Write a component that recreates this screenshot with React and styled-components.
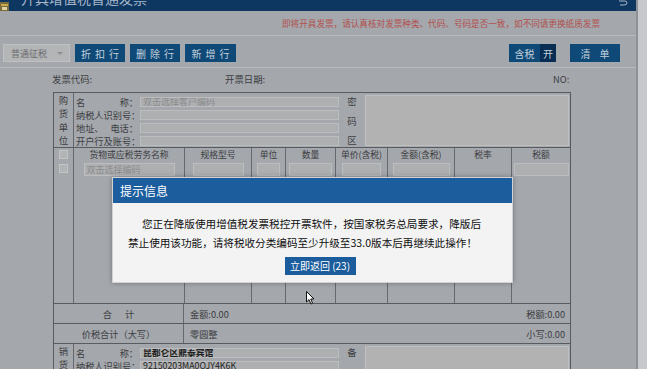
import React from 'react';
import styled, { createGlobalStyle } from 'styled-components';

const GlobalStyle = createGlobalStyle`
  body {
    margin: 0;
    background: #a4a7ac;
  }
`;

const Root = styled.div`
  position: relative;
  width: 647px;
  height: 369px;
  overflow: hidden;
  display: flex;
  background: #a4a7ac;
  color: #3c3e42;
  font-family: "Noto Sans CJK SC", "Noto Sans", sans-serif;
`;

const Main = styled.div`
  width: 636px;
  flex: none;
  display: flex;
  flex-direction: column;
  border-right: 2px solid #8e9196;
`;

const Strip = styled.div`
  flex: 1;
  background: #c6c8cb;
`;

const TitleBar = styled.div`
  height: 11px;
  flex: none;
  overflow: hidden;
  display: flex;
  align-items: flex-start;
  background: #0d3761;
`;

const AppIcon = styled.svg`
  width: 9px;
  height: 9px;
  margin-top: 2px;
  flex: none;
`;

const TitleText = styled.div`
  margin: -9px 0 0 12px;
  font-size: 14px;
  line-height: 14px;
  color: #a7b6c8;
  white-space: nowrap;
`;

const TitleTool = styled.svg`
  margin-left: auto;
  margin-right: 8px;
  width: 10px;
  height: 6px;
`;

const Notice = styled.div`
  height: 24px;
  flex: none;
  display: flex;
  align-items: center;
  justify-content: flex-end;
  padding-right: 36px;
  font-size: 8.6px;
  color: #b34f4c;
  white-space: nowrap;
`;

const Divider = styled.div`
  height: 1px;
  flex: none;
  background: #b7babe;
`;

const Toolbar = styled.div`
  height: 31px;
  flex: none;
  display: flex;
  align-items: flex-start;
  gap: 5px;
  padding: 8px 16px 0 3px;
  box-sizing: border-box;
`;

const Select = styled.div`
  width: 67px;
  height: 18px;
  box-sizing: border-box;
  display: flex;
  align-items: center;
  justify-content: space-between;
  padding: 0 6px 0 7px;
  background: #b4b5b7;
  border: 1px solid #bfc0c2;
  font-size: 9px;
  color: #6b6c6e;
`;

const Caret = styled.span`
  width: 0;
  height: 0;
  border-left: 3px solid transparent;
  border-right: 3px solid transparent;
  border-top: 3px solid #8d8e90;
`;

const Button = styled.div`
  width: ${p => p.$w || 50}px;
  height: 18px;
  display: flex;
  align-items: center;
  justify-content: center;
  background: ${p => (p.$dark ? '#0a2e53' : '#0f4977')};
  color: #c3d0dc;
  font-size: 10px;
  letter-spacing: ${p => p.$spacing ?? 4}px;
  text-indent: ${p => p.$spacing ?? 4}px;
  white-space: nowrap;
`;

const Toggle = styled.div`
  margin-left: auto;
  margin-right: 9px;
  display: flex;
`;

const InfoRow = styled.div`
  height: 24px;
  flex: none;
  display: flex;
  padding: 5px 0 0 52px;
  box-sizing: border-box;
  font-size: 9.4px;
  line-height: 12px;
`;

const InfoItem = styled.div`
  width: ${p => p.$w}px;
  flex: none;
`;

const Table = styled.div`
  width: 518px;
  margin-left: 53px;
  box-sizing: border-box;
  border: 1px solid #585b60;
  border-bottom: none;
  display: flex;
  flex-direction: column;
`;

const Party = styled.div`
  height: ${p => p.$h}px;
  display: flex;
  border-bottom: ${p => (p.$last ? 'none' : '1px solid #585b60')};
  flex: none;
`;

const SideTitle = styled.div`
  width: 19px;
  flex: none;
  display: flex;
  flex-direction: column;
  align-items: center;
  padding-top: 1px;
  font-size: 9.4px;
  line-height: 13.4px;
`;

const Fields = styled.div`
  width: 266px;
  flex: none;
  border-left: 1px solid #65686c;
  padding: 2px 0 0 2px;
  box-sizing: border-box;
`;

const FieldRow = styled.div`
  height: 13px;
  display: flex;
  align-items: center;
  gap: 2px;
  font-size: 9.2px;
`;

const Label = styled.div`
  width: 62px;
  flex: none;
  display: flex;
  justify-content: space-between;
  white-space: nowrap;
`;

const Input = styled.div`
  width: ${p => p.$w}px;
  height: ${p => p.$h || 10}px;
  box-sizing: border-box;
  flex: none;
  background: #aeafb1;
  border: 1px solid #bcbdbf;
  display: flex;
  align-items: center;
  padding-left: 2px;
  overflow: hidden;
  white-space: nowrap;
  font-size: ${p => (p.$value ? 8.8 : 9)}px;
  font-weight: ${p => (p.$bold ? 700 : 400)};
  color: ${p => (p.$value ? '#1d1e20' : '#8a8b8d')};
`;

const AreaTitle = styled.div`
  width: 26px;
  flex: none;
  display: flex;
  flex-direction: column;
  justify-content: space-between;
  align-items: center;
  padding: 2px 0 1px;
  box-sizing: border-box;
  font-size: 9.4px;
  line-height: 12px;
`;

const Area = styled.div`
  flex: 1;
  margin: 2px 1px 1px 0;
  background: #b2b2b3;
  border: 1px solid #c0c0c1;
`;

const Goods = styled.div`
  height: 155px;
  display: flex;
  border-bottom: 1px solid #585b60;
  flex: none;
`;

const CheckCol = styled.div`
  width: 19px;
  flex: none;
  display: flex;
  flex-direction: column;
  align-items: center;
  gap: 5px;
  padding-top: 2px;
`;

const Check = styled.div`
  width: 9px;
  height: 9px;
  box-sizing: border-box;
  background: #b3b4b6;
  border: 1px solid #c3c4c6;
`;

const Column = styled.div`
  width: ${p => (p.$w ? `${p.$w}px` : 'auto')};
  flex: ${p => (p.$w ? 'none' : '1')};
  border-left: 1px solid #65686c;
  display: flex;
  flex-direction: column;
  align-items: center;
  padding-top: 1px;
`;

const ColTitle = styled.div`
  height: 12px;
  line-height: 12px;
  font-size: 8.8px;
  white-space: nowrap;
  margin-bottom: 2px;
`;

const SumRow = styled.div`
  height: 19px;
  display: flex;
  align-items: center;
  border-bottom: 1px solid #585b60;
  flex: none;
  font-size: 9.2px;
`;

const SumTitle = styled.div`
  width: 129px;
  align-self: stretch;
  display: flex;
  align-items: center;
  justify-content: center;
  border-right: 1px solid #65686c;
  letter-spacing: ${p => p.$spacing || 0}px;
  text-indent: ${p => p.$spacing || 0}px;
  white-space: nowrap;
`;

const SumValues = styled.div`
  flex: 1;
  display: flex;
  justify-content: space-between;
  padding: 0 5px 0 6px;
  white-space: nowrap;
`;

const Overlay = styled.div`
  position: absolute;
  left: 112px;
  top: 177px;
  width: 401px;
  height: 106px;
  box-sizing: border-box;
  background: #f3f3f3;
  border: 1px solid #d2d2d2;
  box-shadow: 0 0 5px rgba(0, 0, 0, 0.3);
  display: flex;
  flex-direction: column;
`;

const DialogHead = styled.div`
  height: 25px;
  flex: none;
  background: #1c5d9e;
  color: #ffffff;
  font-size: 12px;
  line-height: 25px;
  padding-left: 7px;
`;

const DialogBody = styled.div`
  flex: 1;
  padding: 11px 0 0 15px;
  display: flex;
  flex-direction: column;
`;

const Message = styled.p`
  margin: 0;
  font-size: 10.6px;
  line-height: 19px;
  color: #0e0e0e;
  text-indent: 14px;
  white-space: nowrap;
`;

const DialogActions = styled.div`
  display: flex;
  justify-content: center;
  padding: 5px 0 0 0;
`;

const ReturnButton = styled.div`
  width: 71px;
  height: 18px;
  background: #1a5c9c;
  color: #ffffff;
  font-size: 10px;
  line-height: 18px;
  text-align: center;
  white-space: nowrap;
`;

const Cursor = styled.svg`
  position: absolute;
  left: 306px;
  top: 291px;
  width: 9px;
  height: 14px;
`;

const goodsColumns = [
  { w: 110, title: '货物或应税劳务名称', input: 91, placeholder: '双击选择编码' },
  { w: 66, title: '规格型号', input: 51 },
  { w: 33, title: '单位', input: 23 },
  { w: 49, title: '数量', input: 43 },
  { w: 51, title: '单价(含税)', input: 39 },
  { w: 66, title: '金额(含税)', input: 57 },
  { w: 56, title: '税率' },
  { title: '税额', input: 55 },
];

const buyerFields = [
  { label: ['名', '称：'], placeholder: '双击选择客户编码' },
  { label: ['纳税人识别号：'] },
  { label: ['地址、', '电话：'] },
  { label: ['开户行及账号：'] },
];

const FieldLabel = ({ parts }) => (
  <Label>
    {parts.map(part => (
      <span key={part}>{part}</span>
    ))}
  </Label>
);

const App = () => (
  <Root>
    <GlobalStyle />
    <Main>
      <TitleBar>
        <AppIcon viewBox="0 0 9 9">
          <rect x="0" y="0" width="9" height="9" fill="#7a6a3c" />
          <rect x="1" y="2" width="7" height="2" fill="#c9a94e" />
          <rect x="2" y="5" width="5" height="3" fill="#e2d3a4" />
        </AppIcon>
        <TitleText>开具增值税普通发票</TitleText>
        <TitleTool viewBox="0 0 10 6">
          <path d="M1 1 H7 Q9 1 9 3 Q9 5 6 5 H2" fill="none" stroke="#a7b6c8" strokeWidth="1" />
        </TitleTool>
      </TitleBar>

      <Notice>即将开具发票，请认真核对发票种类、代码、号码是否一致，如不同请更换纸质发票</Notice>
      <Divider />

      <Toolbar>
        <Select>
          普通征税
          <Caret />
        </Select>
        <Button>折扣行</Button>
        <Button>删除行</Button>
        <Button $w={51}>新增行</Button>
        <Toggle>
          <Button $w={31} $spacing={0}>含税</Button>
          <Button $w={16} $spacing={0} $dark>开</Button>
        </Toggle>
        <Button $spacing={9}>清单</Button>
      </Toolbar>
      <Divider />

      <InfoRow>
        <InfoItem $w={173}>发票代码:</InfoItem>
        <InfoItem $w={328}>开票日期:</InfoItem>
        <InfoItem $w={30}>NO:</InfoItem>
      </InfoRow>

      <Table>
        <Party $h={54}>
          <SideTitle>
            <span>购</span>
            <span>货</span>
            <span>单</span>
            <span>位</span>
          </SideTitle>
          <Fields>
            {buyerFields.map(field => (
              <FieldRow key={field.label.join('')}>
                <FieldLabel parts={field.label} />
                <Input $w={199}>{field.placeholder}</Input>
              </FieldRow>
            ))}
          </Fields>
          <AreaTitle>
            <span>密</span>
            <span>码</span>
            <span>区</span>
          </AreaTitle>
          <Area />
        </Party>

        <Goods>
          <CheckCol>
            <Check />
            <Check />
          </CheckCol>
          {goodsColumns.map(col => (
            <Column key={col.title} $w={col.w}>
              <ColTitle>{col.title}</ColTitle>
              {col.input && (
                <Input $w={col.input} $h={13}>
                  {col.placeholder}
                </Input>
              )}
            </Column>
          ))}
        </Goods>

        <SumRow>
          <SumTitle $spacing={13}>合计</SumTitle>
          <SumValues>
            <span>金额:0.00</span>
            <span>税额:0.00</span>
          </SumValues>
        </SumRow>
        <SumRow>
          <SumTitle>价税合计（大写）</SumTitle>
          <SumValues>
            <span>零圆整</span>
            <span>小写:0.00</span>
          </SumValues>
        </SumRow>

        <Party $h={40} $last>
          <SideTitle>
            <span>销</span>
            <span>货</span>
            <span>单</span>
          </SideTitle>
          <Fields>
            <FieldRow>
              <FieldLabel parts={['名', '称：']} />
              <Input $w={199} $value $bold>昆都仑区鼎泰宾馆</Input>
            </FieldRow>
            <FieldRow>
              <FieldLabel parts={['纳税人识别号：']} />
              <Input $w={199} $value>92150203MA0QJY4K6K</Input>
            </FieldRow>
          </Fields>
          <AreaTitle>
            <span>备</span>
          </AreaTitle>
          <Area />
        </Party>
      </Table>
    </Main>
    <Strip />

    <Overlay>
      <DialogHead>提示信息</DialogHead>
      <DialogBody>
        <Message>
          您正在降版使用增值税发票税控开票软件，按国家税务总局要求，降版后
          <br />
          禁止使用该功能，请将税收分类编码至少升级至33.0版本后再继续此操作！
        </Message>
        <DialogActions>
          <ReturnButton>立即返回 (23)</ReturnButton>
        </DialogActions>
      </DialogBody>
    </Overlay>

    <Cursor viewBox="0 0 9 14">
      <path d="M0.5 0.5 V11 L3 8.6 L5 13 L6.6 12.3 L4.7 8 H8 Z" fill="#ffffff" stroke="#111111" strokeWidth="1" />
    </Cursor>
  </Root>
);

export default App;
